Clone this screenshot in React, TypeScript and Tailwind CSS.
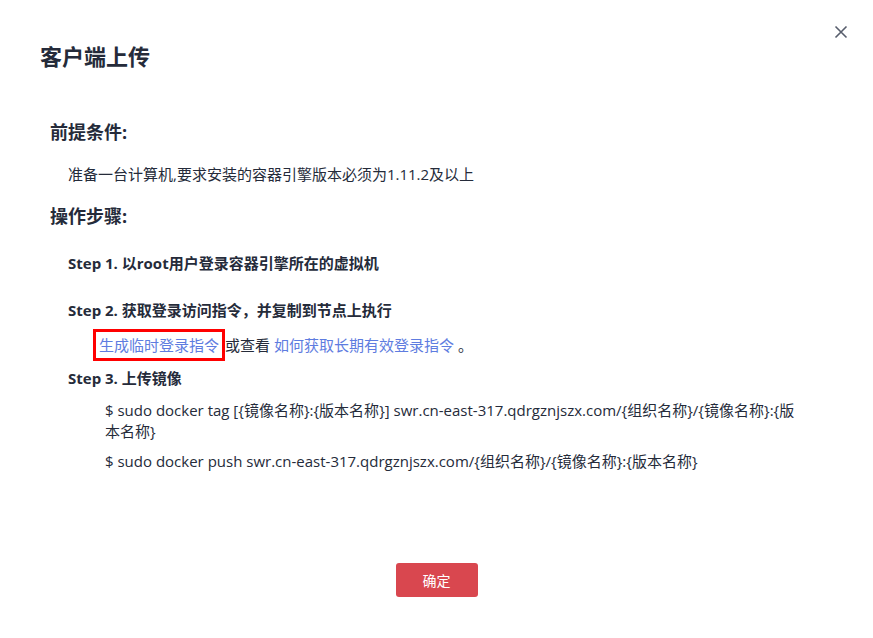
export default function App() {
  const font = {
    fontFamily: '"Open Sans", "Noto Sans CJK SC", sans-serif',
  }
  return (
    <div className="w-[873px] h-[638px] bg-white text-[#252b3a] text-[15px] relative" style={font}>
      <button className="absolute right-[24px] top-[24px] w-[16px] h-[16px] flex items-center justify-center text-[#575d6c]">
        <svg width="14" height="14" viewBox="0 0 14 14" fill="none" stroke="currentColor" strokeWidth="1.6">
          <path d="M1.5 1.5 L12.5 12.5 M12.5 1.5 L1.5 12.5" />
        </svg>
      </button>

      <div className="pl-[40px] pt-[40px]">
        <h1 className="text-[22px] font-bold leading-[32px]">客户端上传</h1>
      </div>

      <div className="pl-[50px] pr-[40px] mt-[47px]">
        <div className="text-[18px] font-bold leading-[26px]">前提条件:</div>
        <div className="leading-[22px] mt-[18px] pl-[18px]">
          准备一台计算机,要求安装的容器引擎版本必须为1.11.2及以上
        </div>

        <div className="text-[18px] font-bold leading-[26px] mt-[18px]">操作步骤:</div>

        <div className="pl-[18px]">
          <div className="font-bold leading-[22px] mt-[23px]">Step 1. 以root用户登录容器引擎所在的虚拟机</div>

          <div className="font-bold leading-[22px] mt-[25px]">Step 2. 获取登录访问指令，并复制到节点上执行</div>
          <div className="leading-[22px] mt-[8px] pl-[25px] flex items-center">
            <span className="border-[3px] border-[#ff0000] px-[3px] py-[2px] text-[#5e7ce0]">生成临时登录指令</span>
            <span>或查看</span>
            <span className="text-[#5e7ce0] ml-[4px]">如何获取长期有效登录指令</span>
            <span className="ml-[4px]">。</span>
          </div>

          <div className="font-bold leading-[22px] mt-[6px]">Step 3. 上传镜像</div>
          <div className="ml-[37px] mt-[11px] leading-[21px] w-[700px]">
            <div>$ sudo docker tag [{'{'}镜像名称{'}'}:{'{'}版本名称{'}'}] swr.cn-east-317.qdrgznjszx.com/{'{'}组织名称{'}'}/{'{'}镜像名称{'}'}:{'{'}版本名称{'}'}</div>
            <div className="mt-[9px]">$ sudo docker push swr.cn-east-317.qdrgznjszx.com/{'{'}组织名称{'}'}/{'{'}镜像名称{'}'}:{'{'}版本名称{'}'}</div>
          </div>
        </div>
      </div>

      <div className="absolute left-0 right-0 top-[563px] flex justify-center">
        <button className="w-[82px] h-[34px] bg-[#d9474f] text-white text-[14px] rounded-[3px]">确定</button>
      </div>
    </div>
  )
}
